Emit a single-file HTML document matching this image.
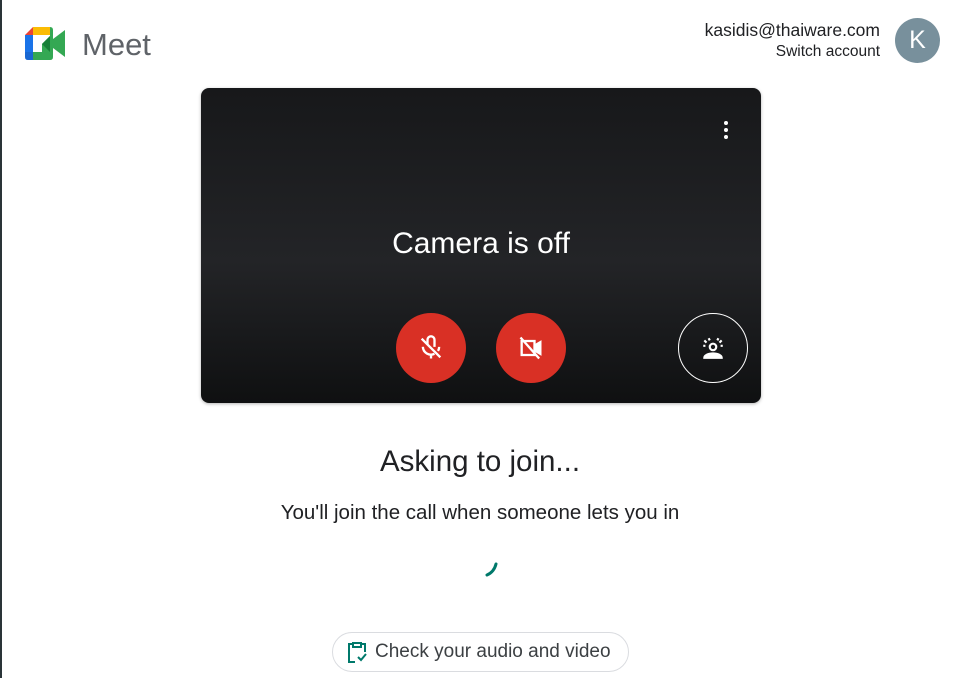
<!DOCTYPE html>
<html><head><meta charset="utf-8"><style>
html,body{margin:0;padding:0;width:953px;height:678px;overflow:hidden;background:#fff;font-family:"Liberation Sans",Arial,sans-serif;position:relative}
.edge{position:absolute;left:0;top:0;width:2px;height:678px;background:#2a3438}
.abs{position:absolute}
.panel{left:201px;top:88px;width:560px;height:315px;border-radius:8px;background:linear-gradient(#17181a,#232427 55%,#0f1011);box-shadow:0 1px 3px rgba(0,0,0,.3)}
.btn{position:absolute;width:70px;height:70px;border-radius:50%;background:#d93025;display:flex;align-items:center;justify-content:center}
</style></head><body>
<div class="edge"></div>
<svg class="abs" style="left:25px;top:27px" width="42" height="34" viewBox="0 0 42 34">
<path d="M8 0 L0 8 L8 8Z" fill="#ea4335"/>
<path d="M8 0 H25 V8 H8Z" fill="#fbbc04"/>
<path d="M0 8 H8 V25 H0Z" fill="#1a73e8"/>
<path d="M0 25 H8 V33 H3 Q0 33 0 30Z" fill="#1967d2"/>
<path d="M8 25 H25 V33 H8Z" fill="#34a853"/>
<path d="M25 0 Q28 0 28 3 V30 Q28 33 25 33 V25 H16 V17 L25 8Z" fill="#34a853"/>
<path d="M16 17 L25 8 V25Z" fill="#188038"/>
<path d="M28 12 L40 3 V30 L28 21Z" fill="#34a853"/>
<rect x="8" y="8" width="9" height="17" fill="#fff"/><rect x="8" y="8" width="17" height="9" fill="#fff"/>
<path d="M17 17 L25 9 V25 H17Z" fill="#34a853"/><path d="M17 17 L25 9 V25Z" fill="#188038"/>
</svg>
<div class="abs" style="left:82px;top:27px;font-size:31px;color:#5f6368">Meet</div>
<div class="abs" style="right:73px;top:20px;text-align:right;color:#202124;line-height:21px"><div style="font-size:17.5px">kasidis@thaiware.com</div><div style="font-size:15.5px">Switch account</div></div>
<div class="abs" style="left:895px;top:18px;width:45px;height:45px;border-radius:50%;background:#78909c;color:#fff;font-size:25px;display:flex;align-items:center;justify-content:center">K</div>
<div class="abs panel">
<svg class="abs" style="left:521px;top:32px" width="8" height="22"><circle cx="4" cy="3" r="2" fill="#fff"/><circle cx="4" cy="10" r="2" fill="#fff"/><circle cx="4" cy="17" r="2" fill="#fff"/></svg>
<div class="abs" style="left:0;width:560px;top:139px;text-align:center;color:#fff;font-size:30px">Camera is off</div>
<div class="btn" style="left:195px;top:225px"><svg width="28" height="28" viewBox="0 0 24 24" fill="none" stroke="#fff" stroke-width="2"><path d="M9 9V5a3 3 0 0 1 6 0v6"/><path d="M5 11a7 7 0 0 0 10 6M19 11a7 7 0 0 1-1 3.5M12 18v3"/><path d="M4 4l16 16"/></svg></div>
<div class="btn" style="left:295px;top:225px"><svg width="28" height="28" viewBox="0 0 24 24" fill="none" stroke="#fff" stroke-width="2"><path d="M4 6h11v12H4z"/><path d="M15 10l5-3v10l-5-3" fill="#fff"/><path d="M3 3l16 18"/></svg></div>
<div class="abs" style="left:477px;top:225px;width:68px;height:68px;border-radius:50%;border:1px solid #fff;display:flex;align-items:center;justify-content:center"><svg width="26" height="26" viewBox="0 0 24 24" fill="none" stroke="#fff" stroke-width="2"><circle cx="12" cy="11" r="3"/><path d="M4 21a8 4 0 0 1 16 0z" fill="#fff"/><path d="M4 5l2 2M8 3l1 2M17 3l-1 2M20 5l-2 2M3 10h2M19 10h2"/></svg></div>
</div>
<div class="abs" style="left:0;width:960px;top:445px;text-align:center;font-size:29.5px;color:#202124">Asking to join...</div>
<div class="abs" style="left:0;width:960px;top:501px;text-align:center;font-size:20.5px;color:#202124">You'll join the call when someone lets you in</div>
<svg class="abs" style="left:484px;top:560px" width="16" height="20"><path d="M12 4 Q10 12 3 15" stroke="#00796b" stroke-width="3" fill="none" stroke-linecap="round"/></svg>
<div class="abs" style="left:332px;top:632px;width:295px;height:38px;border:1px solid #dadce0;border-radius:20px;display:flex;align-items:center">
<svg style="margin-left:14px" width="20" height="22" viewBox="0 0 20 22" fill="none" stroke="#00796b" stroke-width="2"><path d="M6 3H2v18h6M14 3h4v8"/><path d="M6 2h8v4H6z"/><path d="M11 16l3 3 5-6"/></svg>
<span style="margin-left:8px;font-size:19px;color:#3c4043">Check your audio and video</span></div>
</body></html>
